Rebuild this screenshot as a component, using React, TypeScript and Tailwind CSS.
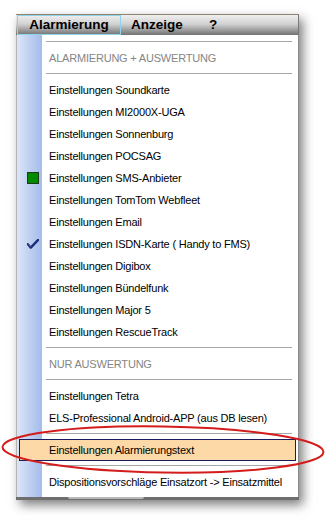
import React from "react";

type Item = { label: string; icon?: "green" | "check" };

const groupA: Item[] = [
  { label: "Einstellungen Soundkarte" },
  { label: "Einstellungen MI2000X-UGA" },
  { label: "Einstellungen Sonnenburg" },
  { label: "Einstellungen POCSAG" },
  { label: "Einstellungen SMS-Anbieter", icon: "green" },
  { label: "Einstellungen TomTom Webfleet" },
  { label: "Einstellungen Email" },
  { label: "Einstellungen ISDN-Karte ( Handy to FMS)", icon: "check" },
  { label: "Einstellungen Digibox" },
  { label: "Einstellungen Bündelfunk" },
  { label: "Einstellungen Major 5" },
  { label: "Einstellungen RescueTrack" },
];

const font = { fontFamily: '"Liberation Sans", Arial, sans-serif' };

function Sep() {
  return (
    <div className="h-[10px] pt-[4px] pl-[29px] pr-[6px]">
      <div className="h-px bg-[#a7a7a7]" />
    </div>
  );
}

function Row({ item, header, active }: { item: Item; header?: boolean; active?: boolean }) {
  return (
    <div
      className={
        "mx-[2px] h-[22px] flex items-center relative " +
        (active ? "border border-[#1b1b5e] bg-[#fdd9a7]" : "")
      }
    >
      <div className={"h-full flex items-center justify-center " + (active ? "w-[29px]" : "w-[30px]")}>
        {item.icon === "green" && (
          <div className="w-[12px] h-[12px] bg-[#008a00] border border-[#1c3a1c] ml-[-3px]" />
        )}
        {item.icon === "check" && (
          <svg width="12" height="10" viewBox="0 0 12 10" className="ml-[-3px]">
            <path d="M0.8 5.2 L3.8 8.6 L11.2 0.8" fill="none" stroke="#1d2c78" strokeWidth="2.4" strokeLinejoin="round" strokeLinecap="round" />
            <path d="M1.5 5.3 L3.9 7.8" fill="none" stroke="#6c7ab8" strokeWidth="0.8" />
          </svg>
        )}
      </div>
      <span
        className={"text-[11px] tracking-[-0.2px] whitespace-nowrap " + (header ? "text-[#858585]" : "text-black")}
        style={font}
      >
        {item.label}
      </span>
    </div>
  );
}

export default function App() {
  return (
    <div className="w-[328px] h-[520px] bg-white relative overflow-hidden pt-[14px] pl-[16px]">
      <div className="w-[283px] shadow-[4px_5px_10px_rgba(0,0,0,0.5)]">
        {/* Menu bar */}
        <div className="h-[21px] border-t border-[#8d8472] bg-[linear-gradient(to_bottom,#efefef,#d2d2d2_45%,#727272)] flex items-stretch border-r border-r-[#7a7a7a]">
          <div className="ml-[1px] w-[104px] border border-[#8fd3ea] flex items-center justify-center">
            <span className="text-[13.5px] font-bold text-black leading-none" style={font}>
              Alarmierung
            </span>
          </div>
          <div className="w-[72px] flex items-center pl-[10px]">
            <span className="text-[13.5px] font-bold text-black leading-none" style={font}>
              Anzeige
            </span>
          </div>
          <div className="flex items-center pl-[16px]">
            <span className="text-[13.5px] font-bold text-black leading-none" style={font}>
              ?
            </span>
          </div>
        </div>
        {/* Menu body */}
        <div className="border-l border-l-[#b4b4b4] border-r border-r-[#8a8a8a] pt-[2px] pb-[4px] bg-[linear-gradient(to_right,#dbe5f7_0px,#c9d8f3_8px,#a4bce9_25px,#ffffff_25px)]">
          <Sep />
          <Row item={{ label: "ALARMIERUNG + AUSWERTUNG" }} header />
          <Sep />
          {groupA.map((it) => (
            <Row key={it.label} item={it} />
          ))}
          <Sep />
          <Row item={{ label: "NUR AUSWERTUNG" }} header />
          <Sep />
          <Row item={{ label: "Einstellungen Tetra" }} />
          <Row item={{ label: "ELS-Professional Android-APP (aus DB lesen)" }} />
          <Sep />
          <Row item={{ label: "Einstellungen Alarmierungstext" }} active />
          <Sep />
          <Row item={{ label: "Dispositionsvorschläge Einsatzort -> Einsatzmittel" }} />
        </div>
        <div className="h-[3px] bg-[#6e6e6e] flex">
          <div className="ml-[52px] w-[76px] h-[2px] rounded-b-[3px] bg-[#b9b9b9]" />
        </div>
      </div>
      <svg
        width="328"
        height="70"
        viewBox="0 0 328 70"
        className="absolute left-0 top-[415px] pointer-events-none"
      >
        <ellipse cx="163" cy="34.5" rx="160.5" ry="23" fill="none" stroke="#d41c1c" strokeWidth="2" transform="rotate(0.9 163 34.5)" />
      </svg>
    </div>
  );
}
